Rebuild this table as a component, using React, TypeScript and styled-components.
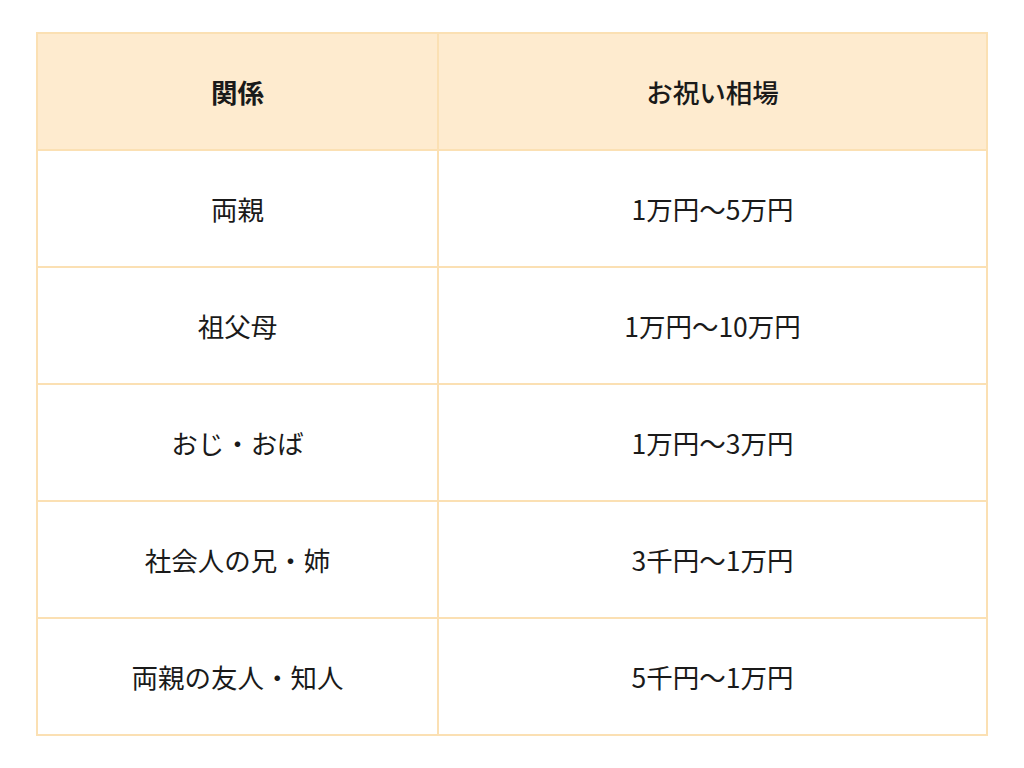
import styled, { createGlobalStyle } from "styled-components";

const GlobalStyle = createGlobalStyle`
  html, body {
    margin: 0;
    padding: 0;
    background-color: #fff;
  }
  body {
    font-family: "Noto Sans CJK JP", "Noto Sans", sans-serif;
    color: #1a1a1a;
  }
`;

const Page = styled.div`
  padding: 32px 36px;
`;

const Table = styled.table`
  width: 952px;
  border-collapse: collapse;
  table-layout: fixed;
`;

const HeadCell = styled.th<{ $weight: number }>`
  height: 115px;
  padding: 0;
  border: 2px solid #fbe0b3;
  background-color: #feebcf;
  text-align: center;
  font-size: 26.5px;
  font-weight: ${(p) => p.$weight};
  color: #1a1a1a;
`;

const Cell = styled.td`
  height: 115px;
  padding: 0;
  border: 2px solid #fbe0b3;
  text-align: center;
  font-size: 26.5px;
  font-weight: 400;
  color: #1a1a1a;
`;

const rows = [
  { relation: "両親", amount: "1万円〜5万円" },
  { relation: "祖父母", amount: "1万円〜10万円" },
  { relation: "おじ・おば", amount: "1万円〜3万円" },
  { relation: "社会人の兄・姉", amount: "3千円〜1万円" },
  { relation: "両親の友人・知人", amount: "5千円〜1万円" },
];

const App: React.FC = () => {
  return (
    <Page>
      <GlobalStyle />
      <Table>
        <colgroup>
          <col style={{ width: 401 }} />
          <col />
        </colgroup>
        <thead>
          <tr>
            <HeadCell $weight={700}>関係</HeadCell>
            <HeadCell $weight={500}>お祝い相場</HeadCell>
          </tr>
        </thead>
        <tbody>
          {rows.map((r) => (
            <tr key={r.relation}>
              <Cell>{r.relation}</Cell>
              <Cell>{r.amount}</Cell>
            </tr>
          ))}
        </tbody>
      </Table>
    </Page>
  );
};

export default App;
